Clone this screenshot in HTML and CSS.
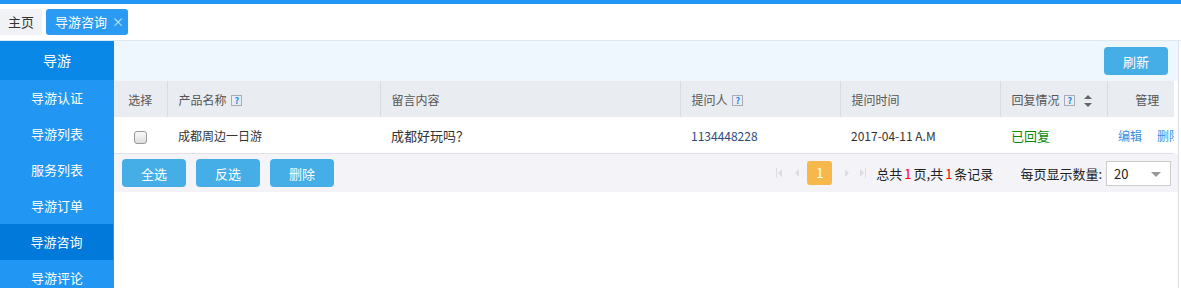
FILE: index.html
```html
<!DOCTYPE html>
<html>
<head>
    <meta charset="utf-8">
    <title>导游咨询</title>
    <link rel="stylesheet" href="styles.css">
</head>
<body>
    <div class="topline"></div>
    <div class="tabs">
        <span class="tab">主页</span>
        <span class="tab active">导游咨询<i class="close">×</i></span>
    </div>
    <div class="frame">
        <div class="sidebar">
            <div class="side-title">导游</div>
            <div class="side-item">导游认证</div>
            <div class="side-item">导游列表</div>
            <div class="side-item">服务列表</div>
            <div class="side-item">导游订单</div>
            <div class="side-item current">导游咨询</div>
            <div class="side-item">导游评论</div>
        </div>

        <div class="main">
            <div class="toolbar">
                <button class="btn">刷新</button>
            </div>

            <div class="table-wrap">
                <table class="grid">
                    <colgroup>
                        <col style="width:53px">
                        <col style="width:213px">
                        <col style="width:300px">
                        <col style="width:160px">
                        <col style="width:160px">
                        <col style="width:107px">
                        <col style="width:80px">
                    </colgroup>
                    <thead>
                        <tr>
                            <th class="center">选择</th>
                            <th>产品名称 <span class="help">?</span></th>
                            <th>留言内容</th>
                            <th>提问人 <span class="help">?</span></th>
                            <th>提问时间</th>
                            <th>回复情况 <span class="help">?</span> <span class="sort"></span></th>
                            <th class="center">管理</th>
                        </tr>
                    </thead>
                    <tbody>
                        <tr>
                            <td class="center"><span class="check"></span></td>
                            <td>成都周边一日游</td>
                            <td class="dark">成都好玩吗？</td>
                            <td class="num">1134448228</td>
                            <td>2017-04-11 A.M</td>
                            <td class="ok">已回复</td>
                            <td class="ops"><a>编辑</a><a>删除</a></td>
                        </tr>
                    </tbody>
                </table>
            </div>

            <div class="footer">
                <div class="actions">
                    <button class="btn">全选</button>
                    <button class="btn">反选</button>
                    <button class="btn">删除</button>
                </div>
                <div class="pager">
                    <span class="arrow first"></span>
                    <span class="arrow prev"></span>
                    <span class="page">1</span>
                    <span class="arrow next"></span>
                    <span class="arrow last"></span>
                    <span class="total">总共<em>1</em>页,共<em>1</em>条记录</span>
                    <span class="size-label">每页显示数量:</span>
                    <span class="select">20<i class="caret"></i></span>
                </div>
            </div>
        </div>
    </div>
</body>
</html>
```

FILE: styles.css
```css
body { margin: 0; font-family: "Noto Sans CJK SC", "Liberation Sans", sans-serif; font-size: 12px; color: #333; background: #fff; }
.topline { height: 4px; background: #2196f3; }

.tabs { height: 36px; border-bottom: 1px solid #dfe7f0; display: flex; align-items: center; gap: 4px; }
.tab { height: 26px; line-height: 26px; padding: 0 8px; background: #f0f2f5; border-radius: 0 3px 3px 0; font-size: 13px; color: #333; }
.tab.active { background: #2b9af3; color: #fff; border-radius: 3px; padding: 0 4px 0 9px; }
.close { font-style: normal; font-size: 12px; color: #d6e9fb; margin-left: 5px; }

.frame { display: flex; height: 247px; }
.sidebar { width: 114px; background: #2196f3; flex-shrink: 0; }
.side-title { height: 39px; line-height: 39px; background: #0a88e8; color: #fff; text-align: center; font-size: 14px; }
.side-item { height: 36px; line-height: 36px; color: #fff; text-align: center; font-size: 13px; }
.side-item.current { background: #0079db; margin-right: 1px; }

.main { width: 1064px; border-right: 1px solid #dcdfe6; background: #fff; }
.toolbar { height: 40px; background: #eef6fe; display: flex; justify-content: flex-end; align-items: center; padding-right: 10px; }

.btn { width: 64px; height: 28px; border: none; border-radius: 4px; background: #45aee6; color: #fff; font-family: inherit; font-size: 13px; padding: 0; }

.table-wrap { overflow: hidden; width: 1060px; }
.grid { border-collapse: collapse; table-layout: fixed; width: 1073px; }
.grid th { height: 36px; background: #e9ecf1; font-weight: normal; text-align: left; padding: 0 0 0 11px; color: #555; font-size: 12px; border-left: 1px solid #d9dde3; white-space: nowrap; }
.grid th:first-child { border-left: none; }
.grid td { height: 36px; padding: 0 0 0 11px; border-bottom: 1px solid #e0e0e6; white-space: nowrap; color: #333; }
.grid .center { text-align: center; padding-left: 0; }
.grid td.dark { color: #333; font-size: 13px; }
.grid td.num { color: #2a4a7a; }
.grid td.ok { color: #0a8a0a; font-size: 13px; }
.ops a { color: #3a8ee6; margin-right: 15px; }

.help { display: inline-block; width: 9px; height: 9px; line-height: 9px; border: 1px solid #aab; font-size: 9px; font-weight: bold; color: #1a8ae6; text-align: center; vertical-align: 1px; margin-left: 2px; }
.sort { display: inline-block; position: relative; width: 8px; height: 12px; margin-left: 6px; vertical-align: -2px; }
.sort:before, .sort:after { content: ""; position: absolute; left: 0; border-left: 4px solid transparent; border-right: 4px solid transparent; }
.sort:before { top: 0; border-bottom: 4px solid #666; }
.sort:after { bottom: 0; border-top: 4px solid #666; }

.check { display: inline-block; width: 11px; height: 11px; border: 1px solid #999; border-radius: 3px; background: linear-gradient(#fafafa, #ddd); vertical-align: middle; }

.footer { height: 38px; background: #f4f4f8; display: flex; align-items: center; justify-content: space-between; padding: 0 8px; }
.actions { display: flex; gap: 10px; }
.pager { display: flex; align-items: center; font-size: 13px; color: #222; }
.arrow { width: 0; height: 0; border-top: 4px solid transparent; border-bottom: 4px solid transparent; position: relative; }
.first, .prev { border-right: 4px solid #ddd; }
.next, .last { border-left: 4px solid #ddd; }
.first { margin-left: 2px; margin-right: 13px; }
.prev { margin-right: 8px; }
.next { margin-right: 11px; }
.last { margin-right: 12px; }
.first:before { content: ""; position: absolute; left: -2px; top: -5px; width: 1px; height: 10px; background: #ddd; }
.last:after { content: ""; position: absolute; left: 1px; top: -5px; width: 1px; height: 10px; background: #ddd; }
.page { width: 25px; height: 24px; line-height: 24px; text-align: center; background: #f7b84b; color: #fff; border-radius: 3px; margin-right: 13px; font-size: 13px; }
.total em { font-style: normal; color: #f00; margin: 0 2px; }
.size-label { margin-left: 27px; margin-right: 4px; }
.select { width: 56px; height: 23px; line-height: 23px; border: 1px solid #ccc; background: #fff; padding-left: 7px; position: relative; font-size: 13px; margin-right: -1px; }
.caret { position: absolute; right: 9px; top: 10px; border-left: 5px solid transparent; border-right: 5px solid transparent; border-top: 5px solid #999; }
```
